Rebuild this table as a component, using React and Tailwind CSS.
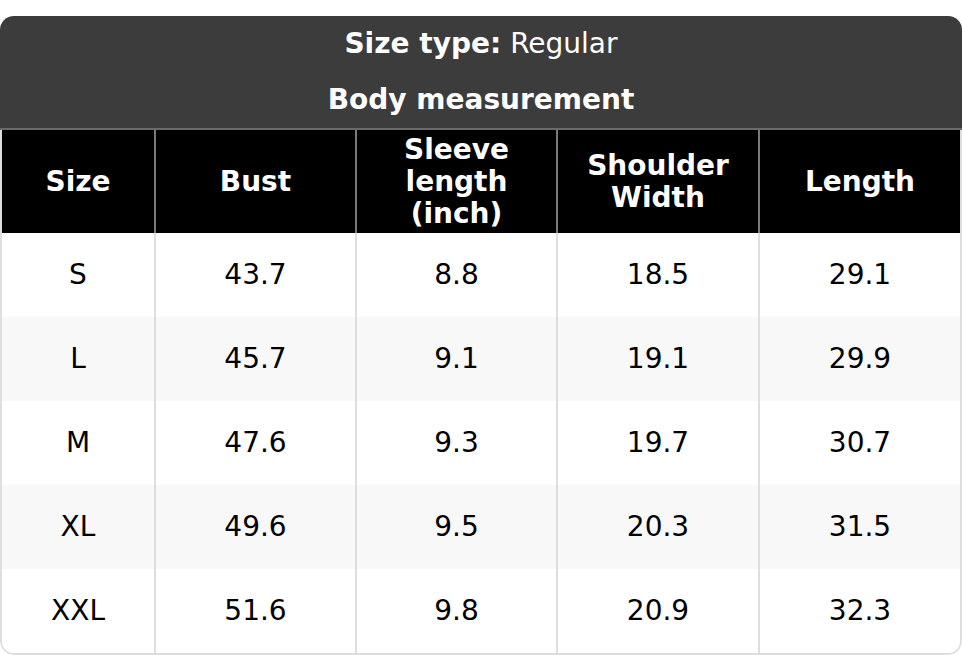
const rows = [
  { size: 'S', bust: '43.7', sleeve: '8.8', shoulder: '18.5', length: '29.1' },
  { size: 'L', bust: '45.7', sleeve: '9.1', shoulder: '19.1', length: '29.9' },
  { size: 'M', bust: '47.6', sleeve: '9.3', shoulder: '19.7', length: '30.7' },
  { size: 'XL', bust: '49.6', sleeve: '9.5', shoulder: '20.3', length: '31.5' },
  { size: 'XXL', bust: '51.6', sleeve: '9.8', shoulder: '20.9', length: '32.3' },
];

export default function App() {
  return (
    <div className="bg-white pt-4 font-['DejaVu_Sans',sans-serif] text-[28px]">
      <div className="overflow-hidden rounded-[14px] bg-white">
        <div className="bg-[#3c3c3c] text-center text-white">
          <div className="flex h-[56px] items-center justify-center">
            <span className="font-bold">Size type:</span>
            <span className="ml-[9px]">Regular</span>
          </div>
          <div className="flex h-[56px] items-center justify-center font-bold">Body measurement</div>
        </div>
        <div className="h-[2px] bg-[#6a6a6a]" />
        <div className="overflow-hidden rounded-b-[14px] border-x-2 border-b-2 border-[#dedede]">
          <table className="w-full table-fixed border-collapse text-center">
            <colgroup>
              <col className="w-[153px]" />
              <col className="w-[201px]" />
              <col className="w-[201px]" />
              <col className="w-[202px]" />
              <col />
            </colgroup>
            <thead>
              <tr className="bg-black text-white">
                <th className="h-[103px] p-0 font-bold leading-[32px]">Size</th>
                <th className="h-[103px] border-l-2 border-[#7a7a7a] p-0 font-bold leading-[32px]">Bust</th>
                <th className="h-[103px] border-l-2 border-[#7a7a7a] p-0 font-bold leading-[32px]">
                  Sleeve
                  <br />
                  length
                  <br />
                  (inch)
                </th>
                <th className="h-[103px] border-l-2 border-[#7a7a7a] p-0 font-bold leading-[32px]">
                  Shoulder
                  <br />
                  Width
                </th>
                <th className="h-[103px] border-l-2 border-[#7a7a7a] p-0 font-bold leading-[32px]">Length</th>
              </tr>
            </thead>
            <tbody className="text-black">
              {rows.map((r, i) => (
                <tr key={r.size} className={i % 2 === 1 ? 'bg-[#f8f8f8]' : 'bg-white'}>
                  <td className="h-[84px] p-0">{r.size}</td>
                  <td className="h-[84px] border-l-2 border-[#dedede] p-0">{r.bust}</td>
                  <td className="h-[84px] border-l-2 border-[#dedede] p-0">{r.sleeve}</td>
                  <td className="h-[84px] border-l-2 border-[#dedede] p-0">{r.shoulder}</td>
                  <td className="h-[84px] border-l-2 border-[#dedede] p-0">{r.length}</td>
                </tr>
              ))}
            </tbody>
          </table>
        </div>
      </div>
    </div>
  );
}
